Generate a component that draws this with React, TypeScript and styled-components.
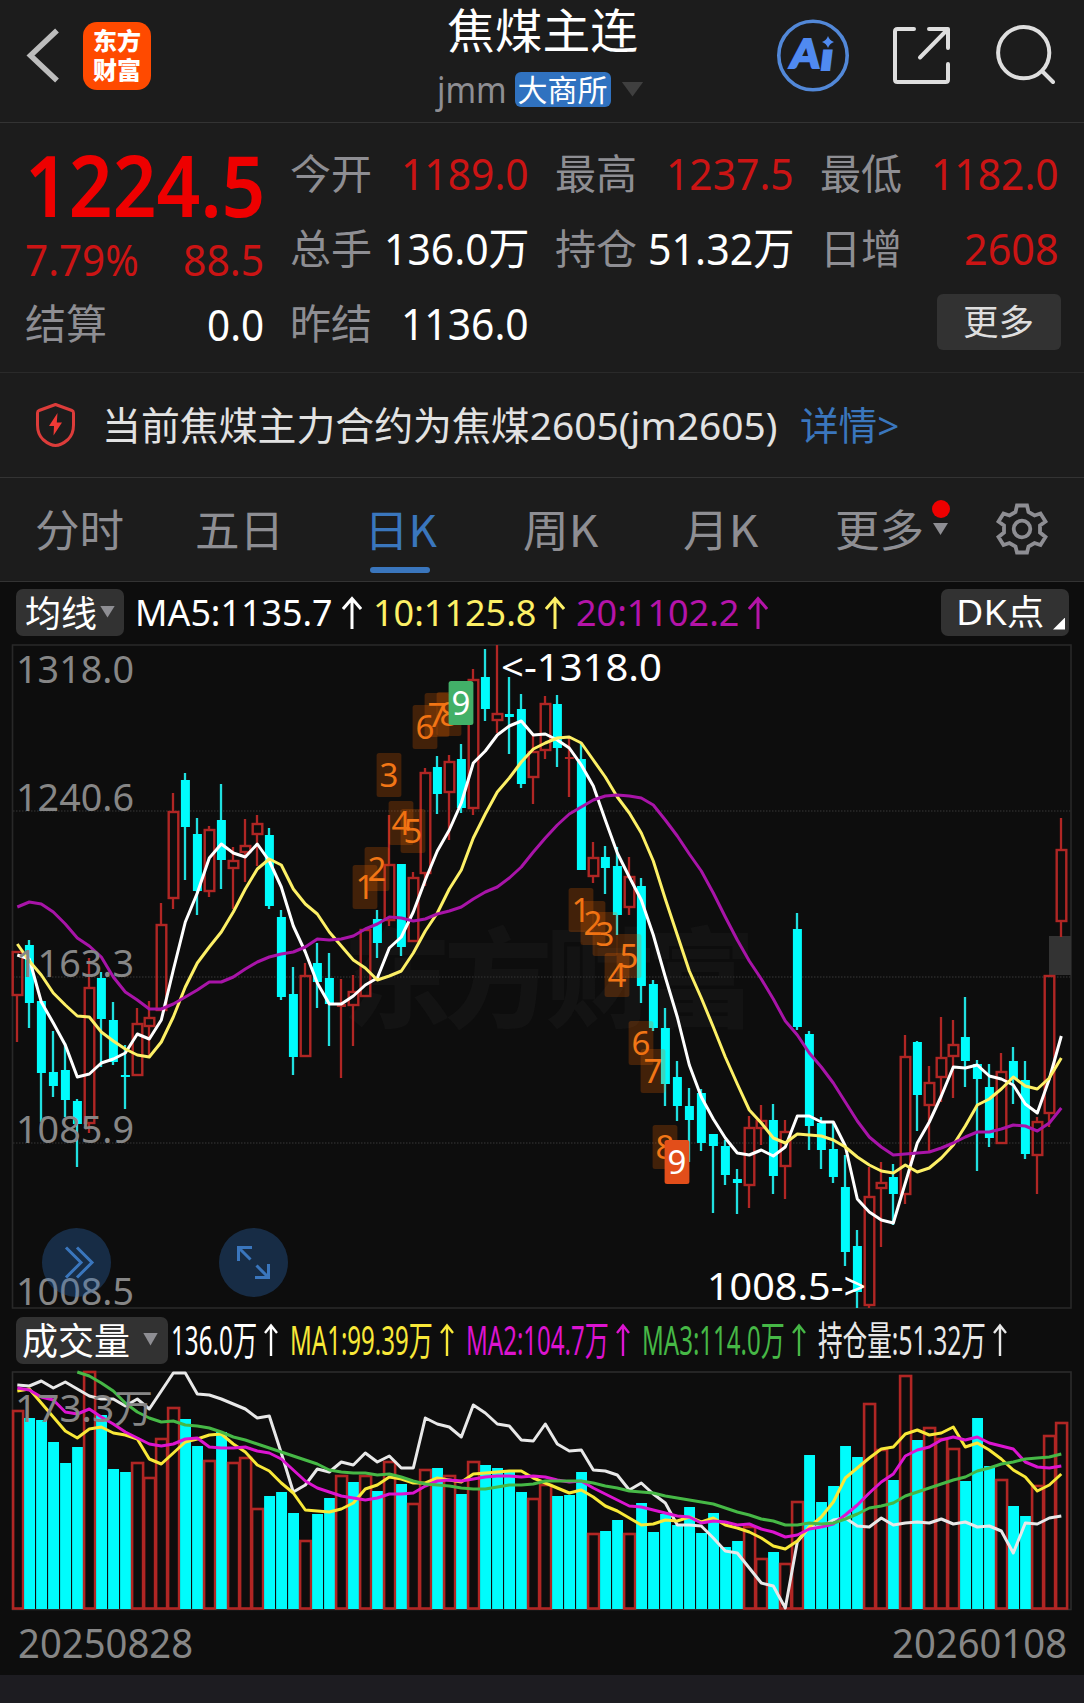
import React, { useLayoutEffect, useRef, useState } from "react";
import styled, { createGlobalStyle } from "styled-components";

const LATIN = '"Noto Sans", "Noto Sans CJK SC", sans-serif';
const CJK = '"Noto Sans CJK SC", "Noto Sans", sans-serif';

const C = {
  panel: "#1c1c1c",
  chart: "#0d0d0d",
  line: "#333333",
  label: "#8e8e93",
  red: "#cb1414",
  blue: "#3a76bd",
  cyan: "#00fcfc",
  hollow: "#b02624",
  axis: "#868686",
};

const GlobalStyle = createGlobalStyle`
  body { margin: 0; background: ${C.chart}; }
  * { box-sizing: border-box; }
`;

const Page = styled.div`
  width: 1084px;
  height: 1703px;
  display: flex;
  flex-direction: column;
  overflow: hidden;
  background: ${C.chart};
  font-family: ${LATIN};
  color: #fff;
`;

/* ---------- text fitted to a given width ---------- */

const FitBox = styled.span<{ $w: number; $size: number; $color?: string; $weight?: number; $cjk?: boolean; $lift: number }>`
  display: block;
  flex: none;
  width: ${(p) => p.$w}px;
  height: ${(p) => Math.round(p.$size * 1.3)}px;
  margin-bottom: ${(p) => p.$lift * 2}px;
  line-height: ${(p) => Math.round(p.$size * 1.3)}px;
  font-size: ${(p) => p.$size}px;
  font-weight: ${(p) => p.$weight ?? 400};
  font-family: ${(p) => (p.$cjk ? CJK : LATIN)};
  color: ${(p) => p.$color ?? "inherit"};
  white-space: nowrap;
`;
const FitInner = styled.span`
  display: inline-block;
  transform-origin: left center;
`;

type FitProps = { w: number; size: number; color?: string; weight?: number; cjk?: boolean; lift?: number; children: string };
function Fit({ w, size, color, weight, cjk, lift = 0, children }: FitProps) {
  const ref = useRef<HTMLSpanElement>(null);
  const [sx, setSx] = useState(1);
  useLayoutEffect(() => {
    if (ref.current) setSx(w / ref.current.offsetWidth);
  }, [w, size, children]);
  return (
    <FitBox $w={w} $size={size} $color={color} $weight={weight} $cjk={cjk} $lift={lift}>
      <FitInner ref={ref} style={{ transform: `scaleX(${sx})` }}>
        {children}
      </FitInner>
    </FitBox>
  );
}

/* ---------- header ---------- */

const Header = styled.header`
  height: 123px;
  flex: none;
  display: grid;
  grid-template-columns: 400px 284px 1fr;
  background: ${C.panel};
  border-bottom: 1px solid ${C.line};
`;
const HeaderLeft = styled.div`
  display: flex;
  align-items: center;
  padding: 0 0 11px 24px;
  gap: 21px;
`;
const Logo = styled.div`
  width: 68px;
  height: 68px;
  padding-bottom: 3px;
  border-radius: 14px;
  background: #ff4a00;
  display: flex;
  flex-direction: column;
  align-items: center;
  justify-content: center;
  font: 900 24px/29px ${CJK};
`;
const HeaderCenter = styled.div`
  display: flex;
  flex-direction: column;
  align-items: center;
`;
const TitleRow = styled.div`
  height: 62px;
  display: flex;
  align-items: center;
`;
const SubRow = styled.div`
  height: 54px;
  display: flex;
  align-items: center;
  padding-right: 4px;
  gap: 8px;
`;
const Exchange = styled.div`
  width: 96px;
  height: 35px;
  border-radius: 6px;
  background: #3072c0;
  display: flex;
  align-items: center;
  justify-content: center;
`;
const Triangle = styled.i<{ $w: number; $h: number; $color: string; $ml?: number }>`
  flex: none;
  width: ${(p) => p.$w}px;
  height: ${(p) => p.$h}px;
  margin-left: ${(p) => p.$ml ?? 0}px;
  background: ${(p) => p.$color};
  clip-path: polygon(0 0, 100% 0, 50% 100%);
`;
const HeaderRight = styled.div`
  display: flex;
  align-items: flex-start;
  padding: 17px 0 0 91px;
  gap: 40px;
`;

/* ---------- quote ---------- */

const Quote = styled.section`
  height: 250px;
  flex: none;
  display: grid;
  grid-template-columns: 239px 769px;
  column-gap: 26px;
  padding: 13px 25px 0;
  background: ${C.panel};
  border-bottom: 1px solid #2a2a2a;
`;
const PriceColumn = styled.div`
  display: flex;
  flex-direction: column;
`;
const PriceLine = styled.div`
  height: 96px;
  display: flex;
  align-items: center;
`;
const ChangeLine = styled.div`
  height: 55px;
  display: flex;
  align-items: center;
  justify-content: space-between;
`;
const StatGrid = styled.div`
  display: grid;
  grid-template-columns: repeat(3, 239px);
  grid-auto-rows: 75px;
  column-gap: 26px;
`;
const Stat = styled.div`
  height: 75px;
  display: flex;
  align-items: center;
  justify-content: space-between;
`;
const ButtonCell = styled.div`
  grid-column: 3;
  display: flex;
  justify-content: flex-end;
  align-items: center;
  padding-bottom: 3px;
`;
const MoreButton = styled.button`
  width: 124px;
  height: 56px;
  margin-right: -2px;
  border: 0;
  padding: 0 2px 5px 0;
  border-radius: 6px;
  background: #323232;
  display: flex;
  align-items: center;
  justify-content: center;
`;

/* ---------- notice, tabs ---------- */

const Notice = styled.section`
  height: 105px;
  flex: none;
  display: flex;
  align-items: center;
  padding-left: 35px;
  background: ${C.panel};
  border-bottom: 1px solid ${C.line};
`;
const NoticeTexts = styled.div`
  display: flex;
  gap: 23px;
  margin-left: 25px;
`;
const Tabs = styled.nav`
  height: 104px;
  flex: none;
  display: grid;
  grid-template-columns: 159px 160px 163px 156px 164px 180px 80px;
  background: ${C.panel};
  border-bottom: 1px solid ${C.line};
`;
const Tab = styled.div`
  position: relative;
  display: flex;
  align-items: center;
  justify-content: center;
`;
const Underline = styled.div`
  position: absolute;
  left: 51px;
  bottom: 8px;
  width: 60px;
  height: 6px;
  border-radius: 3px;
  background: ${C.blue};
`;
const MoreMark = styled.div`
  display: flex;
  flex-direction: column;
  align-items: center;
  gap: 5px;
  margin: -24px 0 0 8px;
`;
const Dot = styled.div`
  width: 18px;
  height: 18px;
  border-radius: 50%;
  background: #ee0000;
`;

/* ---------- indicator bars ---------- */

const Bar = styled.div<{ $h: number; $gap: number }>`
  height: ${(p) => p.$h}px;
  flex: none;
  display: flex;
  align-items: center;
  gap: ${(p) => p.$gap}px;
  padding: 0 15px 0 16px;
`;
const Chip = styled.button<{ $w: number; $pl: number; $mr?: number }>`
  width: ${(p) => p.$w}px;
  height: 47px;
  flex: none;
  margin-right: ${(p) => p.$mr ?? 0}px;
  padding: 0 0 2px ${(p) => p.$pl}px;
  border: 0;
  border-radius: 7px;
  background: #323232;
  color: #fff;
  display: flex;
  align-items: center;
`;
const LegendItem = styled.div<{ $color: string; $gap: number }>`
  display: flex;
  align-items: center;
  gap: ${(p) => p.$gap}px;
  color: ${(p) => p.$color};
`;
const Spacer = styled.div`
  flex: 1;
`;
const Corner = styled.i`
  width: 12px;
  height: 12px;
  margin: 24px 0 0 12px;
  background: #fff;
  clip-path: polygon(100% 0, 100% 100%, 0 100%);
`;
const Chart = styled.svg`
  display: block;
  flex: none;
`;
const Dates = styled.div`
  height: 63px;
  flex: none;
  display: flex;
  align-items: center;
  justify-content: space-between;
  padding: 0 17px 1px 18px;
`;
const Footer = styled.div`
  flex: 1;
  background: #1d1c21;
`;

/* ---------- series: type, high, body top, body bottom, low ---------- */

const candles = `R 951 951 996 1042|C 940 945 1003 1028|C 1001 1001 1073 1122|C 1031 1072 1086 1097|C 1043 1070 1100 1117|C 1099 1101 1124 1167|R 958 987 1124 1133|C 972 978 1019 1067|C 1002 1020 1062 1065|C 1045 1075 1077 1109|R 1008 1023 1076 1076|R 1001 1017 1027 1057|R 903 924 1011 1011|R 793 811 899 909|C 773 780 827 880|C 818 834 891 915|R 826 829 892 897|C 784 820 860 889|R 847 860 869 909|R 819 845 853 882|R 815 823 835 866|C 828 835 906 909|C 910 917 997 1000|C 967 994 1057 1075|R 963 975 1057 1057|C 943 963 982 1008|C 953 978 1004 1046|R 979 1004 1007 1078|R 975 991 1006 1046|R 929 929 997 997|C 910 919 943 958|R 815 864 921 926|C 864 864 947 956|R 872 877 942 942|R 768 772 874 886|C 756 767 794 814|R 755 761 793 840|C 744 759 808 813|R 669 679 809 815|C 649 677 709 721|R 645 713 721 733|C 677 714 717 754|C 694 709 784 788|R 736 751 778 804|R 696 703 751 759|C 695 704 748 767|R 736 757 759 797|C 743 759 870 870|R 842 857 877 883|C 846 857 868 894|C 847 866 915 935|R 857 876 908 915|C 878 886 986 1003|C 980 984 1028 1031|C 1008 1028 1084 1106|C 1061 1077 1106 1121|C 1088 1106 1120 1162|C 1089 1093 1143 1151|C 1134 1134 1146 1213|C 1140 1146 1175 1185|C 1169 1179 1183 1214|R 1116 1127 1186 1208|R 1105 1120 1129 1145|C 1104 1120 1176 1194|R 1120 1131 1167 1199|C 913 929 1027 1030|C 1031 1034 1126 1150|C 1117 1123 1150 1169|C 1122 1149 1177 1183|C 1155 1187 1252 1266|C 1230 1246 1292 1308|R 1167 1196 1306 1308|R 1162 1182 1189 1247|C 1164 1177 1194 1225|R 1035 1056 1195 1204|C 1041 1042 1095 1131|R 1066 1082 1106 1151|R 1017 1057 1078 1102|R 1020 1044 1057 1098|C 997 1037 1061 1087|C 1060 1064 1079 1171|C 1064 1087 1138 1147|R 1053 1071 1144 1144|C 1047 1061 1079 1104|C 1061 1080 1154 1159|R 1117 1121 1156 1194|R 975 975 1114 1127|R 818 849 922 937`
  .split("|")
  .map((row) => {
    const [kind, ...v] = row.split(" ");
    return { up: kind === "R", v: v.map(Number) };
  });

const nums = (s: string) => s.split(" ").map(Number);

const ma5 = nums("955 959 1002 1023 1045 1077 1074 1063 1059 1053 1034 1039 1020 970 922 893 858 844 853 857 844 861 887 926 952 983 1004 1004 996 985 978 948 937 912 880 851 830 803 763 751 735 726 721 735 734 740 748 765 786 820 853 877 900 935 977 1017 1065 1097 1119 1138 1153 1155 1150 1156 1147 1116 1116 1122 1122 1146 1199 1212 1220 1223 1183 1143 1122 1096 1067 1068 1065 1076 1079 1085 1104 1113 1079 1036");
const ma10 = nums("944 961 975 993 1005 1016 1017 1032 1041 1049 1055 1057 1042 1017 987 963 947 932 912 889 869 859 865 889 904 914 932 946 960 968 980 976 971 953 931 913 889 870 838 814 792 778 762 749 743 738 737 743 760 777 797 813 833 861 899 935 971 998 1027 1057 1084 1110 1123 1138 1143 1134 1135 1136 1140 1147 1157 1165 1171 1173 1165 1172 1168 1158 1145 1126 1105 1099 1089 1077 1086 1089 1078 1058");
const ma20 = nums("907 902 904 912 924 938 946 957 977 992 1000 1009 1009 1004 997 990 982 982 977 969 962 957 954 952 947 939 940 939 936 929 924 917 918 921 919 914 911 907 899 892 887 878 867 852 838 825 814 807 800 796 795 796 798 805 820 836 854 871 893 917 940 961 979 999 1021 1035 1053 1067 1083 1102 1121 1137 1147 1155 1154 1153 1152 1148 1143 1137 1132 1132 1129 1125 1126 1131 1123 1108");

const volumes = "R1411 C1418 C1420 C1442 C1463 C1447 R1372 C1415 C1469 C1472 R1463 R1478 R1439 R1408 C1419 C1446 R1461 C1432 R1463 R1458 R1509 C1496 C1492 C1513 R1541 C1514 C1498 R1476 C1482 R1476 C1491 R1462 C1484 R1504 R1470 C1468 R1476 C1494 R1462 C1465 C1468 C1472 C1492 R1499 R1485 C1496 C1495 C1472 R1534 C1531 C1520 R1534 C1503 C1532 C1514 C1525 C1507 C1533 C1513 C1547 C1541 R1527 R1559 C1552 R1564 R1502 C1455 C1502 C1486 C1446 C1457 R1404 R1450 C1480 R1376 C1440 R1428 R1439 R1449 C1481 C1418 C1466 R1480 C1506 C1516 R1486 R1436 R1423"
  .split(" ")
  .map((s) => ({ up: s[0] === "R", top: Number(s.slice(1)) }));

const openInterest = nums("1385 1386 1381 1388 1382 1389 1396 1399 1399 1406 1399 1409 1391 1373 1373 1394 1395 1399 1404 1409 1418 1416 1453 1492 1485 1469 1472 1462 1465 1453 1462 1456 1468 1468 1418 1424 1427 1437 1405 1413 1424 1426 1440 1441 1424 1444 1451 1450 1470 1471 1475 1490 1483 1494 1503 1525 1525 1526 1538 1551 1553 1568 1583 1586 1608 1542 1527 1527 1520 1518 1526 1527 1518 1525 1523 1522 1523 1519 1524 1522 1527 1526 1531 1553 1523 1524 1518 1516");
const vma1 = nums("1391 1389 1403 1417 1431 1438 1429 1427 1433 1435 1439 1459 1464 1453 1442 1439 1435 1434 1444 1452 1465 1471 1483 1493 1510 1511 1512 1509 1503 1489 1485 1477 1479 1483 1483 1478 1480 1482 1474 1473 1472 1471 1471 1478 1483 1488 1493 1490 1497 1506 1511 1518 1525 1524 1520 1521 1517 1522 1518 1525 1528 1532 1538 1546 1549 1541 1527 1517 1502 1478 1468 1458 1449 1447 1434 1430 1435 1433 1427 1447 1443 1450 1459 1470 1477 1491 1485 1474");
const vma2 = nums("1388 1390 1397 1400 1412 1414 1409 1417 1424 1432 1438 1444 1446 1444 1439 1438 1447 1448 1448 1447 1451 1453 1459 1470 1481 1488 1492 1496 1498 1500 1498 1494 1494 1493 1486 1481 1480 1481 1479 1477 1476 1476 1477 1476 1477 1480 1482 1481 1488 1494 1500 1506 1507 1510 1513 1516 1517 1523 1521 1522 1525 1524 1529 1532 1537 1535 1529 1527 1524 1515 1505 1493 1482 1474 1456 1450 1447 1440 1437 1440 1437 1443 1446 1449 1462 1467 1468 1466");
const vma3 = nums("1372 1376 1383 1391 1403 1412 1418 1422 1421 1425 1426 1428 1432 1437 1440 1444 1448 1452 1456 1460 1464 1470 1472 1473 1473 1475 1474 1477 1481 1484 1485 1486 1488 1489 1489 1487 1485 1485 1484 1481 1481 1481 1481 1483 1486 1488 1491 1492 1493 1496 1498 1500 1502 1504 1508 1512 1515 1519 1521 1525 1525 1523 1524 1523 1519 1514 1508 1506 1503 1496 1492 1488 1484 1480 1477 1471 1468 1464 1462 1459 1458 1457 1454");

const badges: [string, number, number, ("sell" | "buy")?][] = [
  ["1", 365, 887], ["2", 377, 869], ["3", 389, 775], ["4", 401, 823], ["5", 413, 831],
  ["6", 425, 727], ["7", 437, 715], ["8", 449, 714], ["9", 461, 703, "sell"],
  ["1", 581, 910], ["2", 593, 923], ["3", 605, 934], ["4", 617, 975], ["5", 629, 956],
  ["6", 641, 1043], ["7", 653, 1071], ["8", 665, 1147], ["9", 677, 1162, "buy"],
];

const X = (i: number) => 17.3 + i * 12;
const points = (ys: number[], from = 0) => ys.map((y, i) => `${X(i + from)},${y}`).join(" ");

function Series({ ys, color, from = 0 }: { ys: number[]; color: string; from?: number }) {
  return <polyline points={points(ys, from)} fill="none" stroke={color} strokeWidth={3} strokeLinejoin="round" />;
}

function Label({ x, y, w, color = C.axis, children }: { x: number; y: number; w: number; color?: string; children: string }) {
  return (
    <text x={x} y={y} fontSize={39} fontFamily={LATIN} fill={color} textLength={w} lengthAdjust="spacingAndGlyphs">
      {children}
    </text>
  );
}

function PriceChart() {
  return (
    <Chart width={1084} height={667} viewBox="0 643 1084 667">
      <text x={343} y={1019} fontSize={108} fontWeight={900} fontFamily={CJK} fill="#131313" textLength={412}>
        东方财富
      </text>
      {[811, 977, 1143].map((y) => (
        <line key={y} x1={13} x2={1071} y1={y} y2={y} stroke="#2a2a2a" strokeWidth={1.4} strokeDasharray="1.5 1.5" />
      ))}
      <rect x={12.5} y={645} width={1058.5} height={663} fill="none" stroke="#282828" strokeWidth={1.6} />
      <rect x={1049} y={936} width={22} height={39} fill="#333" />
      {candles.map(({ up, v: [h, t, b, l] }, i) => {
        const x = X(i);
        const col = up ? C.hollow : C.cyan;
        const thin = b - t < 4;
        return (
          <g key={i}>
            {h < t && <line x1={x - 0.3} x2={x - 0.3} y1={h} y2={t} stroke={up ? col : "#20e0e0"} strokeWidth={2.3} />}
            {l > b && <line x1={x - 0.3} x2={x - 0.3} y1={b} y2={l} stroke={up ? col : "#20e0e0"} strokeWidth={2.3} />}
            {up && !thin ? (
              <rect x={x - 4.6} y={t + 1} width={9.6} height={b - t - 2} fill="none" stroke={col} strokeWidth={2.4} />
            ) : (
              <rect x={x - 4.4} y={t} width={9} height={Math.max(2, b - t)} fill={col} />
            )}
          </g>
        );
      })}
      <Series ys={ma5} color="#ffffff" />
      <Series ys={ma10} color="#fdf066" />
      <Series ys={ma20} color="#a814a8" />
      <Label x={16} y={683} w={118}>1318.0</Label>
      <Label x={16} y={811} w={118}>1240.6</Label>
      <Label x={16} y={977} w={118}>1163.3</Label>
      <Label x={16} y={1143} w={118}>1085.9</Label>
      <Label x={16} y={1305} w={118}>1008.5</Label>
      {badges.map(([n, x, y, kind], i) => (
        <g key={i}>
          <rect
            x={x - 12.4} y={y - 22} width={24.8} height={44} rx={2.5}
            fill={kind === "sell" ? "#42b068" : kind === "buy" ? "#e24e1a" : "#f06400"}
            fillOpacity={kind ? 1 : 0.24}
          />
          <text x={x} y={y + 11.5} fontSize={33} fontFamily={LATIN} textAnchor="middle" fill={kind ? "#fff" : "#f27616"}>
            {n}
          </text>
        </g>
      ))}
      <Label x={501} y={681} w={161} color="#fff">{"<-1318.0"}</Label>
      <Label x={707} y={1300} w={159} color="#fff">{"1008.5->"}</Label>
      <circle cx={76.5} cy={1262.5} r={34.5} fill="#2f6fbf" fillOpacity={0.32} />
      <circle cx={253.5} cy={1262.5} r={34.5} fill="#2f6fbf" fillOpacity={0.32} />
      <g fill="none" stroke="#3a76bd" strokeWidth={3}>
        <path d="M66 1247.5L81 1262.5L66 1277.500M77 1247.5L92 1262.5L77 1277.500" />
        <path d="M252 1247.5H238.500V1261M239 1248L250.500 1259.500M255 1277.500H268.500V1264M268 1277L256.500 1265.500" />
      </g>
    </Chart>
  );
}

function VolumeChart() {
  return (
    <Chart width={1084} height={242} viewBox="0 1370 1084 242">
      <rect x={12.5} y={1372} width={1058.5} height={237.5} fill="none" stroke="#2c2c2c" strokeWidth={1.6} />
      {volumes.map(({ up, top }, i) =>
        up ? (
          <rect key={i} x={X(i) - (i ? 5.2 : 4.2)} y={top} width={i ? 11 : 10} height={1608.5 - top} fill="none" stroke={C.hollow} strokeWidth={2.6} />
        ) : (
          <rect key={i} x={X(i) - 5.2} y={top} width={10.9} height={1609 - top} fill={C.cyan} />
        )
      )}
      <Series ys={openInterest} color="#e8e8e8" />
      <Series ys={vma1} color="#f8e838" />
      <Series ys={vma2} color="#dc14d0" />
      <Series ys={vma3} color="#46b846" from={5} />
      <Label x={15} y={1422} w={138}>173.3万</Label>
    </Chart>
  );
}

/* ---------- icons ---------- */

const BackIcon = () => (
  <svg width="38" height="60" viewBox="24 26 38 60" fill="none" stroke="#bdbdbd" strokeWidth="5.5">
    <path d="M57 30.5L30.5 55.5L57 80.5" />
  </svg>
);
const AiIcon = () => (
  <svg width="76" height="76" viewBox="775 17 76 76">
    <circle cx="813" cy="55.5" r="34.2" fill="none" stroke="#5288d8" strokeWidth="3.6" />
    <g fill="#508af0" stroke="#508af0" strokeWidth="2" fontFamily="Lato, sans-serif" fontWeight="900" transform="translate(813 69) skewX(-7)">
      <text x="-24" y="-1.2" fontSize="40" textLength="29" lengthAdjust="spacingAndGlyphs">A</text>
      <text x="6" y="0.8" fontSize="38" textLength="13" lengthAdjust="spacingAndGlyphs">ı</text>
    </g>
    <path d="M828 36Q829.500 40.500 834 42Q829.500 43.500 828 48Q826.500 43.500 822 42Q826.500 40.500 828 36Z" fill="#508af0" />
  </svg>
);
const ShareIcon = () => (
  <svg width="60" height="76" viewBox="890 17 60 76" fill="none" stroke="#dedede" strokeWidth="4" strokeLinecap="round" strokeLinejoin="round">
    <path d="M913 29H896.500Q894 29 894 31.500V79.500Q894 82 896.500 82H944.500Q947 82 947 79.500V64M928 29H947V48M946 30L919 57.500" />
  </svg>
);
const SearchIcon = () => (
  <svg width="64" height="76" viewBox="990 17 64 76" fill="none" stroke="#dedede" strokeWidth="4" strokeLinecap="round">
    <circle cx="1022.7" cy="52.7" r="25.6" />
    <path d="M1041.500 71.500L1052 82" />
  </svg>
);
const ShieldIcon = () => (
  <svg width="42" height="48" viewBox="35 400 42 48">
    <path d="M55.500 403.500L72 409.500Q73.500 410 73.500 412V424Q73.500 433 68 438.500Q61 444.500 55.500 444.500Q50 444.500 43 438.500Q37.500 433 37.500 424V412Q37.500 410 39 409.500Z" fill="none" stroke="#dc3c3a" strokeWidth="3" strokeLinejoin="round" />
    <path d="M57.500 412L49 425H54L53.500 434.500L62 421.500H56.800Z" fill="#f03a36" />
  </svg>
);
const GearIcon = () => (
  <svg width="56" height="56" viewBox="-28 -27 56 56" fill="none" stroke="#8e8e93" strokeWidth="3.8">
    <path d="M-5 -23.500H5L6.500 -17L12.500 -13.500L18.500 -15.500L23.500 -7.500L18 -3.500V3.500L23.500 8L18.500 16L12.500 14L6.500 17.500L5 23.500H-5L-6.500 17.500L-12.500 14L-18.500 16L-23.500 8L-18 3.500V-3.500L-23.500 -7.500L-18.500 -15.500L-12.500 -13.500L-6.500 -17Z" />
    <circle r="8.3" />
  </svg>
);
const UpArrow = ({ w }: { w: number }) => (
  <svg width={w} height="34" viewBox={`0 0 ${w} 34`} fill="none" stroke="currentColor" strokeWidth={w > 16 ? 3 : 2.4}>
    <path d={`M1 ${w / 2 + 3}L${w / 2} 2.500L${w - 1} ${w / 2 + 3}M${w / 2} 3V33`} />
  </svg>
);

/* ---------- page ---------- */

function StatItem({ label, value, w, color = "#fff" }: { label: string; value: string; w: number; color?: string }) {
  return (
    <Stat>
      <Fit w={82} size={41} color={C.label} cjk lift={2}>{label}</Fit>
      <Fit w={w} size={44} color={color}>{value}</Fit>
    </Stat>
  );
}

function Legend({ text, w, color, size = 36, arrow = 20, gap = 9 }: { text: string; w: number; color: string; size?: number; arrow?: number; gap?: number }) {
  return (
    <LegendItem $color={color} $gap={gap}>
      <Fit w={w} size={size}>{text}</Fit>
      <UpArrow w={arrow} />
    </LegendItem>
  );
}

export default function App() {
  return (
    <Page>
      <GlobalStyle />
      <Header>
        <HeaderLeft>
          <BackIcon />
          <Logo>
            <span>东方</span>
            <span>财富</span>
          </Logo>
        </HeaderLeft>
        <HeaderCenter>
          <TitleRow>
            <Fit w={191} size={47} cjk lift={4}>焦煤主连</Fit>
          </TitleRow>
          <SubRow>
            <Fit w={70} size={36} color={C.label}>jmm</Fit>
            <Exchange>
              <Fit w={90} size={30} cjk lift={1}>大商所</Fit>
            </Exchange>
            <Triangle $w={22} $h={15} $color="#3f3f3f" $ml={3} />
          </SubRow>
        </HeaderCenter>
        <HeaderRight>
          <AiIcon />
          <ShareIcon />
          <SearchIcon />
        </HeaderRight>
      </Header>

      <Quote>
        <PriceColumn>
          <PriceLine>
            <Fit w={240} size={84} color="#ee0000" weight={600}>1224.5</Fit>
          </PriceLine>
          <ChangeLine>
            <Fit w={114} size={44} color={C.red}>7.79%</Fit>
            <Fit w={81} size={44} color={C.red}>88.5</Fit>
          </ChangeLine>
          <Stat>
            <Fit w={82} size={41} color={C.label} cjk lift={3}>结算</Fit>
            <Fit w={57} size={44}>0.0</Fit>
          </Stat>
        </PriceColumn>
        <StatGrid>
          <StatItem label="今开" value="1189.0" w={128} color={C.red} />
          <StatItem label="最高" value="1237.5" w={128} color={C.red} />
          <StatItem label="最低" value="1182.0" w={128} color={C.red} />
          <StatItem label="总手" value="136.0万" w={145} />
          <StatItem label="持仓" value="51.32万" w={146} />
          <StatItem label="日增" value="2608" w={95} color={C.red} />
          <StatItem label="昨结" value="1136.0" w={128} />
          <ButtonCell>
            <MoreButton>
              <Fit w={71} size={35} color="#dedede" cjk>更多</Fit>
            </MoreButton>
          </ButtonCell>
        </StatGrid>
      </Quote>

      <Notice>
        <ShieldIcon />
        <NoticeTexts>
          <Fit w={675} size={39} color="#e2e2e2" lift={1}>当前焦煤主力合约为焦煤2605(jm2605)</Fit>
          <Fit w={99} size={39} color={C.blue} lift={1}>{"详情>"}</Fit>
        </NoticeTexts>
      </Notice>

      <Tabs>
        <Tab><Fit w={89} size={44} color={C.label} cjk lift={1}>分时</Fit></Tab>
        <Tab><Fit w={89} size={44} color={C.label} cjk lift={1}>五日</Fit></Tab>
        <Tab>
          <Fit w={72} size={44} color={C.blue} cjk lift={1}>日K</Fit>
          <Underline />
        </Tab>
        <Tab><Fit w={75} size={44} color={C.label} cjk lift={1}>周K</Fit></Tab>
        <Tab><Fit w={75} size={44} color={C.label} cjk lift={1}>月K</Fit></Tab>
        <Tab>
          <Fit w={89} size={44} color={C.label} cjk lift={1}>更多</Fit>
          <MoreMark>
            <Dot />
            <Triangle $w={15} $h={12} $color={C.label} />
          </MoreMark>
        </Tab>
        <Tab><GearIcon /></Tab>
      </Tabs>

      <Bar $h={61} $gap={11}>
        <Chip $w={108} $pl={9}>
          <Fit w={72} size={36} cjk>均线</Fit>
          <Triangle $w={15} $h={12} $color="#8e8e93" $ml={3} />
        </Chip>
        <Legend text="MA5:1135.7" w={198} color="#fff" />
        <Legend text="10:1125.8" w={163} color="#fdf066" />
        <Legend text="20:1102.2" w={163} color="#b414a8" />
        <Spacer />
        <Chip $w={128} $pl={12}>
          <Fit w={88} size={35}>DK点</Fit>
          <Corner />
        </Chip>
      </Bar>
      <PriceChart />
      <Bar $h={60} $gap={12}>
        <Chip $w={152} $pl={6} $mr={-9}>
          <Fit w={108} size={37} cjk>成交量</Fit>
          <Triangle $w={15} $h={13} $color="#8e8e93" $ml={13} />
        </Chip>
        <Legend text="136.0万" w={86} size={40} color="#fff" arrow={14} gap={7} />
        <Legend text="MA1:99.39万" w={143} size={40} color="#f8e838" arrow={14} gap={7} />
        <Legend text="MA2:104.7万" w={143} size={40} color="#dc14d0" arrow={14} gap={7} />
        <Legend text="MA3:114.0万" w={143} size={40} color="#46b846" arrow={14} gap={7} />
        <Legend text="持仓量:51.32万" w={168} size={40} color="#e8e8e8" arrow={14} gap={7} />
      </Bar>
      <VolumeChart />
      <Dates>
        <Fit w={175} size={40} color={C.axis}>20250828</Fit>
        <Fit w={175} size={40} color={C.axis}>20260108</Fit>
      </Dates>
      <Footer />
    </Page>
  );
}
